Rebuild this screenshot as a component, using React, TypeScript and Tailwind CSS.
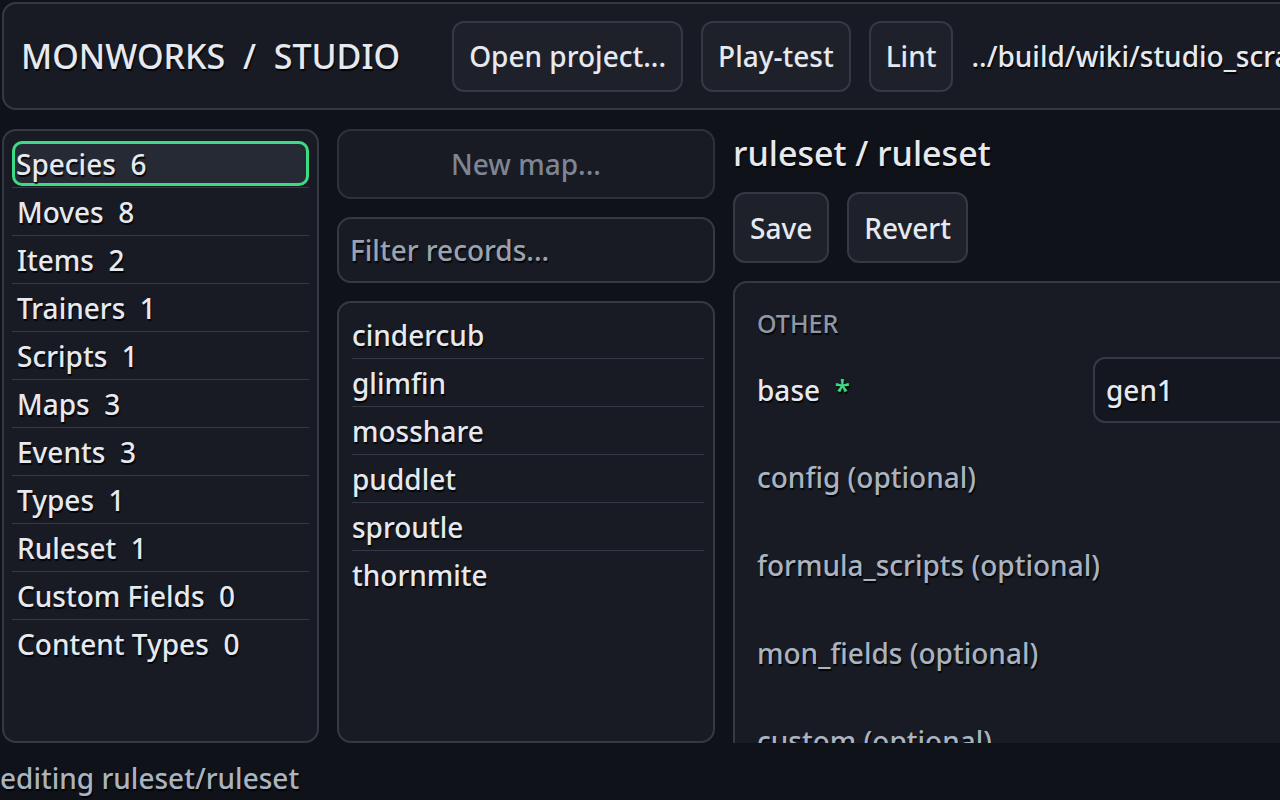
import React from "react";

const categories = [
  { label: "Species", count: 6, active: true },
  { label: "Moves", count: 8 },
  { label: "Items", count: 2 },
  { label: "Trainers", count: 1 },
  { label: "Scripts", count: 1 },
  { label: "Maps", count: 3 },
  { label: "Events", count: 3 },
  { label: "Types", count: 1 },
  { label: "Ruleset", count: 1 },
  { label: "Custom Fields", count: 0 },
  { label: "Content Types", count: 0 },
];

const records = ["cindercub", "glimfin", "mosshare", "puddlet", "sproutle", "thornmite"];

const optionalFields = ["config", "formula_scripts", "mon_fields", "custom"];

function ToolButton({ children }: { children: React.ReactNode }) {
  return (
    <button className="h-[71px] shrink-0 rounded-[12px] border-2 border-[#343944] bg-[#1e212a] px-[15px] text-[28px] text-[#e6e9ef]">
      {children}
    </button>
  );
}

export default function App() {
  return (
    <div className="h-[800px] w-[1280px] overflow-hidden bg-[#0f1219] font-['Noto_Sans',sans-serif] font-medium text-[#e6e9ef] [text-shadow:1px_2px_1px_rgba(0,0,0,0.85)]">
      <div className="flex h-full w-[1440px] flex-col p-[2px]">
        {/* Top bar */}
        <header className="flex h-[108px] shrink-0 items-center gap-[18px] rounded-[14px] border-2 border-[#343944] bg-[#181b23] pl-[17px]">
          <h1 className="mr-[34px] text-[34px] whitespace-pre">MONWORKS  /  STUDIO</h1>
          <ToolButton>Open project...</ToolButton>
          <ToolButton>Play-test</ToolButton>
          <ToolButton>Lint</ToolButton>
          <span className="text-[28px] whitespace-nowrap">../build/wiki/studio_scratch/project.json</span>
        </header>

        <div className="mt-[19px] flex h-[614px] shrink-0 gap-[18px]">
          {/* Categories */}
          <aside className="w-[317px] shrink-0 rounded-[14px] border-2 border-[#343944] bg-[#181b23] px-[8px] pt-[9px]">
            {categories.map((c) => (
              <div key={c.label} className="flex h-[48px] items-center border-b border-[#343944] last:border-b-0">
                <div
                  className={`flex h-[45px] w-full items-center whitespace-pre text-[28px] ${
                    c.active ? "rounded-[10px] border-[3px] border-[#3ddc84] bg-[#262a35] pl-[1px]" : "pl-[5px]"
                  }`}
                >
                  {c.label}  {c.count}
                </div>
              </div>
            ))}
          </aside>

          {/* Records */}
          <section className="flex w-[378px] shrink-0 flex-col gap-[18px]">
            <button className="h-[70px] shrink-0 rounded-[14px] border-2 border-[#2c313b] bg-[#181b23] text-[28px] text-[#7f8592]">
              New map...
            </button>
            <div className="flex h-[66px] shrink-0 items-center rounded-[14px] border-2 border-[#343944] bg-[#181b23] px-[11px] text-[28px] text-[#9ba3b0]">
              Filter records...
            </div>
            <div className="flex-1 rounded-[14px] border-2 border-[#343944] bg-[#181b23] pl-[13px] pr-[9px] pt-[8px]">
              {records.map((r) => (
                <div key={r} className="flex h-[48px] items-center border-b border-[#343944] text-[28px] last:border-b-0">
                  {r}
                </div>
              ))}
            </div>
          </section>

          {/* Editor */}
          <main className="flex flex-1 flex-col">
            <h2 className="h-[50px] pt-[2px] text-[34px] leading-[44px]">ruleset / ruleset</h2>
            <div className="mt-[13px] flex gap-[18px]">
              <ToolButton>Save</ToolButton>
              <ToolButton>Revert</ToolButton>
            </div>
            <div className="mt-[18px] min-h-0 flex-1 overflow-hidden">
              <div className="h-[700px] rounded-t-[14px] border-2 border-b-0 border-[#343944] bg-[#181b23] px-[22px] pt-[22px]">
                <p className="text-[25px] text-[#8f98a6]">OTHER</p>
                <div className="mt-[14px] flex h-[66px] items-center">
                  <span className="w-[336px] shrink-0 whitespace-pre text-[28px]">
                    base  <span className="text-[#3ddc84]">*</span>
                  </span>
                  <div className="flex h-[66px] flex-1 items-center rounded-l-[12px] border-2 border-[#343944] bg-[#141720] px-[11px] text-[28px]">
                    gen1
                  </div>
                </div>
                {optionalFields.map((f) => (
                  <div key={f} className="mt-[20px] flex h-[68px] items-center text-[28px] text-[#aab3c0] first:mt-[19px]">
                    {f} (optional)
                  </div>
                ))}
              </div>
            </div>
          </main>
        </div>

        <footer className="-ml-[2px] flex h-[55px] items-center pt-[14px] text-[28px] text-[#aab3c0]">
          editing ruleset/ruleset
        </footer>
      </div>
    </div>
  );
}
